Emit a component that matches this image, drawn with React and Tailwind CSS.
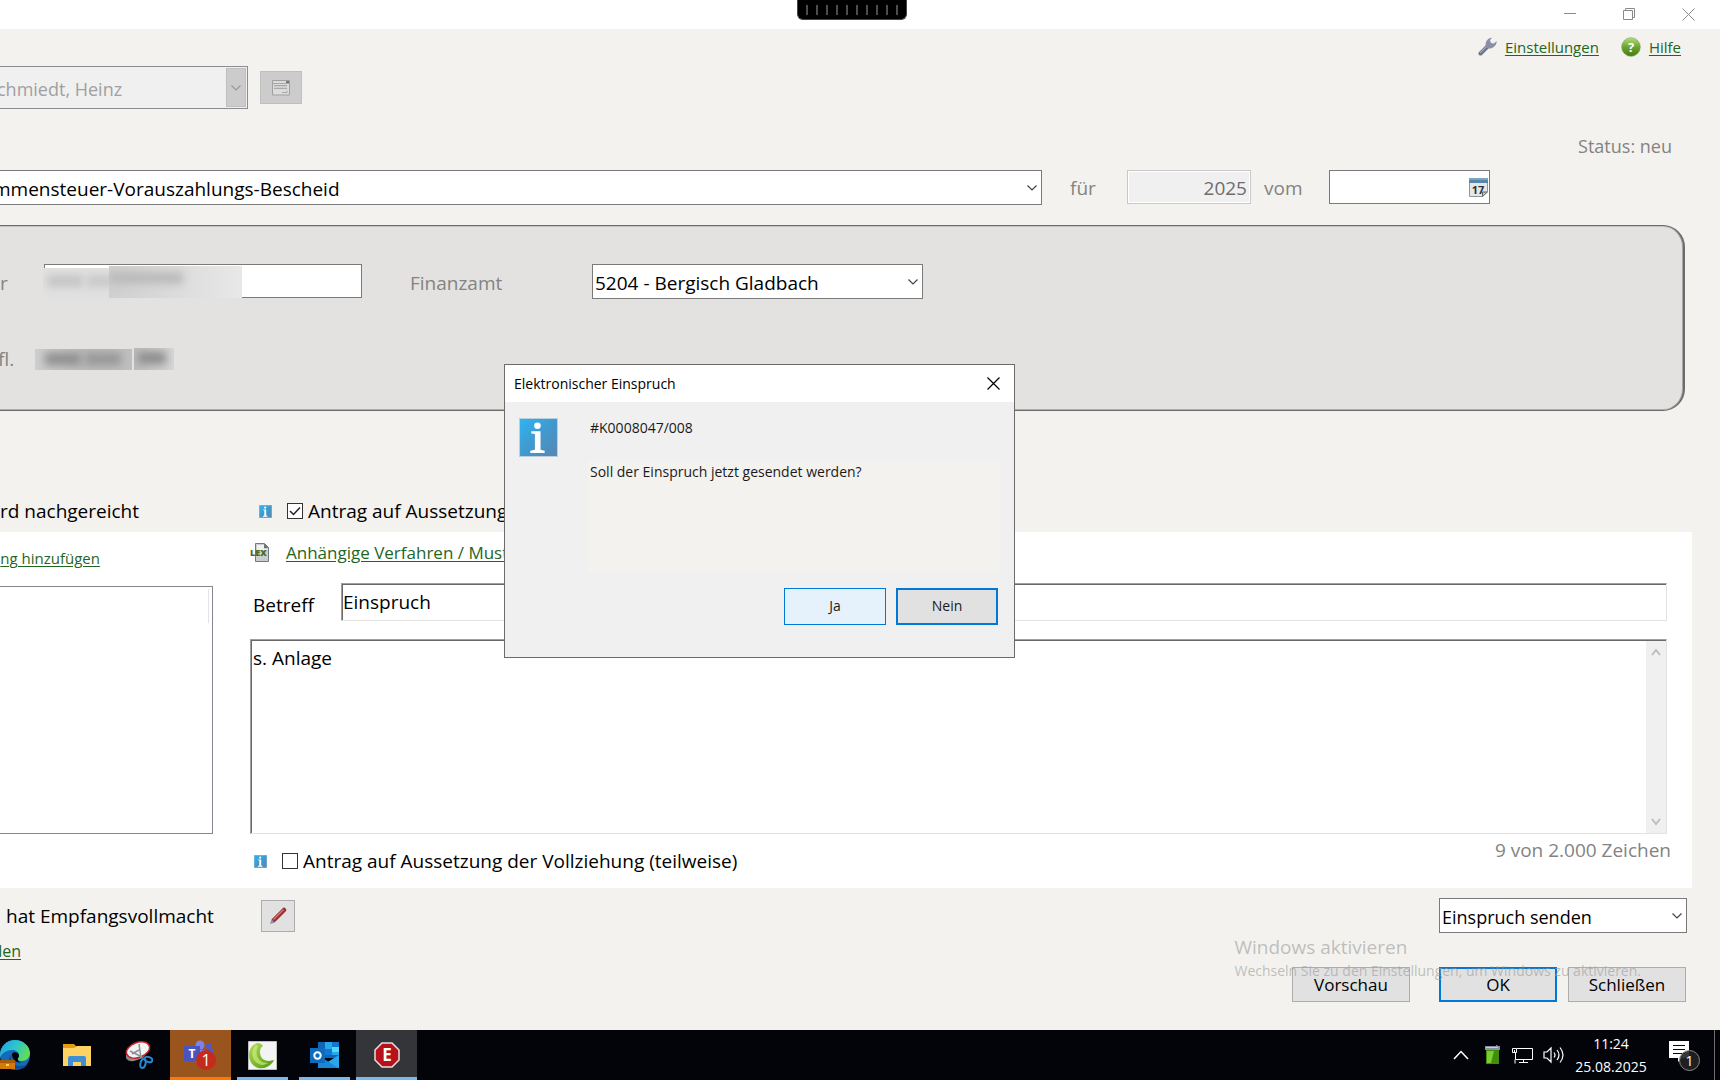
import { useState } from "react";

const App = () => {
  const [suspend, setSuspend] = useState(true);
  const [suspendPartly, setSuspendPartly] = useState(false);

  return (
    <div className="relative min-h-screen flex flex-col overflow-hidden bg-[#f3f2ee] text-black text-[19px] leading-7 font-['Open_Sans','Noto_Sans',sans-serif]">
      <TitleBar />

      <main className="flex-1 flex flex-col">
        <nav className="h-[37px] pb-0.5 flex items-center justify-end pr-[39px] text-[15px] leading-6">
          <WrenchIcon />
          <a href="#einstellungen" className="ml-2 text-[#1f661f] underline underline-offset-2">Einstellungen</a>
          <HelpIcon />
          <a href="#hilfe" className="ml-2 text-[#1f661f] underline underline-offset-2">Hilfe</a>
        </nav>

        {/* client picker, disabled while the objection is open */}
        <div className="flex items-center gap-3">
          <div className="relative -ml-1 w-[252px]">
            <select
              disabled
              aria-label="Mandant"
              className="block w-full h-[43px] pt-0.5 appearance-none bg-[#f0f0f0] border border-[#8c8c8c] text-[18px] text-[#a0a0a0] opacity-100"
            >
              <option>chmiedt, Heinz</option>
            </select>
            <span className="absolute right-0.5 inset-y-0.5 w-5 bg-[#cccccc] border border-[#bfbfbf] flex items-center justify-center pointer-events-none">
              <Chevron color="#9a9a9a" />
            </span>
          </div>
          <button disabled aria-label="Mandant öffnen" className="w-[42px] h-[33px] bg-[#cccccc] border border-[#bfbfbf] flex items-center justify-center">
            <FormIcon />
          </button>
        </div>

        <div className="h-[61px] pt-[23px] pr-12 text-right text-[18px] text-[#838383]">Status: neu</div>

        <div className="flex items-start pr-[230px]">
          <div className="flex-1 -ml-2">
            <Combo label="Bescheid" value="mmensteuer-Vorauszahlungs-Bescheid" className="pl-0" />
          </div>
          <label htmlFor="jahr" className="w-[85px] pt-1 pl-7 text-[#838383]">für</label>
          <input
            id="jahr"
            readOnly
            value="2025"
            className="w-[124px] h-[34px] pt-0.5 pr-[3px] text-right text-[#6d6d6d] bg-[#f0f0f0] border border-[#c8c8c8] shadow-[inset_0_0_0_1px_#fff] outline-none"
          />
          <label htmlFor="vom" className="w-[78px] pt-1 pl-[13px] text-[#838383]">vom</label>
          <div className="relative">
            <input id="vom" className="block w-[161px] h-[34px] px-1 bg-white border border-[#7a7a7a] outline-none" />
            <span className="absolute right-0.5 top-2"><CalendarIcon /></span>
          </div>
        </div>

        <section className="mt-5 mr-[35px] h-[186px] pt-[38px] rounded-r-[22px] bg-[#e3e2e0] border border-l-0 border-r-2 border-[#6b6b6b] shadow-[inset_-1px_0_0_#a5a5a5,inset_0_1px_0_#c4c4c4,inset_0_-1px_0_#b0b0b0]">
          <div className="flex items-start">
            <label htmlFor="steuernummer" className="w-11 pt-[5px] text-[#838383]">r</label>
            <div className="relative">
              <input id="steuernummer" className="block w-[318px] h-[34px] bg-white border border-[#7a7a7a] outline-none" />
              <Redaction className="absolute -left-px top-1 w-[84px] h-[33px] bg-[#e0e1e0]" bars={["left-1 w-9 bg-[#c4c4c4]", "left-11 w-10 bg-[#c8c8c8]"]} />
              <Redaction className="absolute left-[65px] top-0.5 w-[133px] h-8 bg-linear-to-r from-[#cfcfcf] to-[#e8e8e8]" bars={["left-0 w-[74px] bg-[#bababa]"]} />
            </div>
            <label htmlFor="finanzamt" className="w-[230px] pt-[5px] pl-12 text-[#838383]">Finanzamt</label>
            <div className="w-[331px]">
              <Combo id="finanzamt" label="Finanzamt" value="5204 - Bergisch Gladbach" className="pl-0.5" />
            </div>
          </div>
          <div className="mt-[46px] h-7 flex items-center text-[#838383]">
            <span className="w-[35px] -ml-0.5 mr-0.5">fl.</span>
            <Redaction className="relative w-[97px] h-[21px] bg-linear-to-r from-[#cfcfcf] via-[#bcbcbc] to-[#bfbfbf]" bars={["left-2.5 w-9 bg-[#8e8e8e]", "left-[50px] w-9 bg-[#969696]"]} />
            <Redaction className="relative ml-0.5 w-10 h-[22px] bg-linear-to-r from-[#bcbcbc] to-[#d6d6d8]" bars={["left-1 w-7 bg-[#8c8c8c]"]} />
          </div>
        </section>

        <div className="mt-[86px] mb-[7px] h-7 flex items-center">
          <span className="w-[259px]">rd nachgereicht</span>
          <InfoIcon size={13} />
          <Check id="aussetzung" checked={suspend} onChange={setSuspend} label="Antrag auf Aussetzung der Vollziehung" />
        </div>

        <section className="mr-7 h-[356px] pr-[25px] flex gap-[37px] bg-white">
          <div className="w-[213px] pt-3.5">
            <a href="#anlage" className="block h-6 w-[100px] text-[15px] leading-6 text-right whitespace-nowrap text-[#1f661f] underline underline-offset-2">
              ng hinzufügen
            </a>
            <div className="mt-4 h-[248px] pt-0.5 pr-[3px] border border-l-0 border-[#828790]">
              <div className="h-[34px] border-r border-[#e3e3e3]" />
            </div>
          </div>

          <div className="flex-1 pt-[9px] flex flex-col">
            <div className="h-6 flex items-center">
              <LexIcon />
              <a href="#verfahren" className="ml-4 text-[17px] leading-6 text-[#1f661f] underline underline-offset-2">
                Anhängige Verfahren / Musterverfahren
              </a>
            </div>
            <div className="mt-[18px] flex">
              <label htmlFor="betreff" className="w-[91px] pt-2 pl-[3px]">Betreff</label>
              <input
                id="betreff"
                defaultValue="Einspruch"
                className="flex-1 min-w-0 h-[38px] pl-px border border-t-[#a0a0a0] border-l-[#a0a0a0] border-r-[#e3e3e3] border-b-[#e3e3e3] shadow-[inset_1px_1px_0_#696969] outline-none"
              />
            </div>
            <div className="mt-[18px] h-[195px] flex border border-t-[#a0a0a0] border-l-[#a0a0a0] border-r-[#e3e3e3] border-b-[#e3e3e3] shadow-[inset_1px_1px_0_#696969]">
              <textarea
                aria-label="Begründung"
                defaultValue="s. Anlage"
                className="flex-1 mt-px ml-px pt-[3px] pl-px resize-none outline-none"
              />
              <div className="mt-px w-5 py-[7px] flex flex-col items-center justify-between bg-[#f0f0f0]">
                <ScrollArrow up />
                <ScrollArrow />
              </div>
            </div>
            <div className="flex justify-between">
              <div className="pt-[13px] pl-1 flex items-center">
                <InfoIcon size={13} />
                <Check id="teilweise" checked={suspendPartly} onChange={setSuspendPartly} label="Antrag auf Aussetzung der Vollziehung (teilweise)" />
              </div>
              <span className="pt-0.5 -mr-1 text-[#838383]">9 von 2.000 Zeichen</span>
            </div>
          </div>
        </section>

        <div className="mt-2.5 pr-[33px] flex items-center">
          <span className="w-[261px] pl-1.5">hat Empfangsvollmacht</span>
          <button aria-label="Bearbeiten" className="w-[34px] h-8 bg-[#e1e1e1] border border-[#adadad] flex items-center justify-center">
            <PenIcon />
          </button>
          <div className="ml-auto w-[248px]">
            <Combo label="Aktion" value="Einspruch senden" className="pl-0.5 text-[18px]" />
          </div>
        </div>
        <a href="#senden" className="mt-1.5 w-[21px] h-6 flex justify-end text-[16px] leading-6 text-[#1f661f] underline underline-offset-2">den</a>
        <div className="mt-1 mb-7 pr-[34px] flex justify-end text-[17px]">
          <button className="w-[118px] h-[35px] bg-[#e1e1e1] border border-[#adadad]">Vorschau</button>
          <button className="ml-[29px] w-[118px] h-[35px] bg-[#e1e1e1] border-2 border-[#0078d7]">OK</button>
          <button className="ml-[11px] w-[118px] h-[35px] bg-[#e1e1e1] border border-[#adadad]">Schließen</button>
        </div>
      </main>

      <Taskbar />

      {/* activation watermark floats above everything */}
      <div className="absolute right-[79px] bottom-[99px] pointer-events-none text-[#9a9a9a]/60">
        <p className="text-[19px] leading-7">Windows aktivieren</p>
        <p className="text-[14px] leading-5">Wechseln Sie zu den Einstellungen, um Windows zu aktivieren.</p>
      </div>

      <Dialog />
    </div>
  );
};

/* ---------------- WINDOW CHROME ---------------- */
const TitleBar = () => (
  <header className="relative h-[29px] pr-[25px] flex items-center justify-end gap-[46px] bg-white">
    <div className="absolute left-[797px] top-0 w-[110px] h-5 pt-[5px] flex justify-center gap-2 rounded-b-md bg-black border border-t-0 border-[#444]">
      {[...Array(10)].map((_, i) => (
        <span key={i} className="w-0.5 h-2.5 bg-[#4d4d4d]" />
      ))}
    </div>
    <button aria-label="Minimieren">
      <svg width="13" height="13" className="block"><path d="M0 5.500h12" stroke="#8a8a8a" /></svg>
    </button>
    <button aria-label="Wiederherstellen">
      <svg width="13" height="13" fill="none" stroke="#8a8a8a" className="block">
        <path d="M.5 2.500h9v9h-9zM2.500 2.500v-2h9v9h-2" />
      </svg>
    </button>
    <button aria-label="Fenster schließen">
      <svg width="13" height="13" className="block"><path d="M.5.5l12 12M12.500.5l-12 12" stroke="#8a8a8a" /></svg>
    </button>
  </header>
);

const Dialog = () => (
  <div role="dialog" aria-labelledby="dlg-title" className="absolute left-[504px] top-[364px] w-[511px] flex flex-col bg-[#f0f0f0] border border-[#6b6b6b] text-[14px] leading-[22px] text-[#1a1a1a]">
    <div className="h-[37px] pl-[9px] pr-3.5 flex items-center justify-between bg-white text-black">
      <h1 id="dlg-title">Elektronischer Einspruch</h1>
      <button aria-label="Schließen">
        <svg width="13" height="13" className="block"><path d="M.5.5l12 12M12.500.5l-12 12" stroke="#000" strokeWidth="1.200" /></svg>
      </button>
    </div>
    <div className="pt-[15px] pl-3.5 pr-[14px] flex">
      <span className="pt-px"><InfoIcon size={39} /></span>
      <div className="flex-1 ml-[30px] pl-0.5">
        <p className="h-11">#K0008047/008</p>
        <div className="-ml-0.5 pl-0.5 h-[111px] bg-[#f3f2ee]">
          <p className="whitespace-nowrap">Soll der Einspruch jetzt gesendet werden?</p>
        </div>
      </div>
    </div>
    <div className="mt-4 mb-8 pr-4 flex justify-end gap-2.5">
      <button className="w-[102px] h-[37px] pb-0.5 bg-[#e5f1fb] border border-[#0078d7]">Ja</button>
      <button className="w-[102px] h-[37px] pb-0.5 bg-[#e1e1e1] border-2 border-[#0078d7]">Nein</button>
    </div>
  </div>
);

/* ---------------- TASKBAR ---------------- */
const Taskbar = () => (
  <footer className="h-[50px] flex items-stretch justify-between bg-[#02040a] text-white">
    <div className="flex -ml-4 gap-px">
      <Task label="Edge"><EdgeIcon /></Task>
      <Task label="Explorer"><FolderIcon /></Task>
      <Task label="Snipping Tool"><SnipIcon /></Task>
      <Task label="Teams" className="bg-[#9a541e]" bar="inset-x-0 bg-[#ff7800]"><TeamsIcon /></Task>
      <Task label="Lexware" bar="inset-x-[5px] bg-[#76b9ed]"><SwirlIcon /></Task>
      <Task label="Outlook" bar="inset-x-[5px] bg-[#76b9ed]"><OutlookIcon /></Task>
      <Task label="Einspruch" className="bg-[#333539]" bar="inset-x-0 bg-[#76b9ed]"><StopIcon /></Task>
    </div>
    <div className="flex items-center">
      <svg width="16" height="10" fill="none" stroke="#fff" strokeWidth="1.500"><path d="M1 9l7-7.500L15 9" /></svg>
      <svg width="17" height="20" className="ml-[15px]">
        <path d="M2 5h13v14H2z" fill="#3f8f0c" />
        <path d="M3 6h7l-3 12H3z" fill="#7ccc33" />
        <path d="M1 1h11V0h1.500v1H16v4H1z" fill="#8a90a0" />
        <path d="M2 2h12v1H2z" fill="#c9cdd8" />
      </svg>
      <svg width="21" height="17" className="ml-[11px]" fill="none" stroke="#fff">
        <path d="M5 1.500h15.500v11H3.500V6M.5 1.500h4v4h-4zM2.500 3v3M3 16.500v-4M7 15.500h9M11.500 13v2.500" />
      </svg>
      <svg width="22" height="18" className="ml-2.5" fill="none" stroke="#fff" strokeWidth="1.200">
        <path d="M1 6h3l4-4v14l-4-4H1zM11 6.500q2 2.500 0 5M14 4q4 5 0 10M17 1.500q6 7.500 0 15" />
      </svg>
      <div className="ml-2.5 w-[72px] text-center text-[14px] leading-[23px]">
        <p>11:24</p>
        <p>25.08.2025</p>
      </div>
      <div className="relative ml-[22px] w-[31px] h-8">
        <svg width="20" height="22" className="mt-0.5">
          <path d="M0 0h20v17h-7l-4 4v-4H0z" fill="#fff" />
          <path d="M4 4.500h12M4 8.500h12M4 12.500h12" stroke="#02040a" />
        </svg>
        <span className="absolute right-0 bottom-0 size-[21px] flex items-center justify-center rounded-full bg-[#222]/90 border border-[#888] text-[14px]">1</span>
      </div>
      <span className="ml-3.5 mr-[5px] w-px h-full bg-[#6d6d6d]" />
    </div>
  </footer>
);

const Task = ({ label, className = "", bar, children }) => (
  <button aria-label={label} className={`relative w-[61px] flex items-center justify-center ${className}`}>
    {children}
    {bar && <span className={`absolute bottom-0 h-[3px] ${bar}`} />}
  </button>
);

/* ---------------- FORM HELPERS ---------------- */
const Combo = ({ id, label, value, className }) => (
  <div className="relative">
    <select id={id} aria-label={label} className={`block w-full h-[35px] pt-0.5 appearance-none bg-white border border-[#7a7a7a] outline-none ${className}`}>
      <option>{value}</option>
    </select>
    <span className="absolute right-[5px] inset-y-0 flex items-center pointer-events-none">
      <Chevron color="#444" />
    </span>
  </div>
);

const Check = ({ id, checked, onChange, label }) => (
  <div className="flex items-center ml-[15px]">
    <span className="relative">
      <input
        id={id}
        type="checkbox"
        checked={checked}
        onChange={e => onChange(e.target.checked)}
        className="block size-4 appearance-none bg-white border border-[#333]"
      />
      {checked && (
        <svg width="16" height="16" className="absolute inset-0 pointer-events-none" fill="none" stroke="#222" strokeWidth="1.500">
          <path d="M3 8l3.500 3.500L13 4.500" />
        </svg>
      )}
    </span>
    <label htmlFor={id} className="pl-[5px] whitespace-nowrap">{label}</label>
  </div>
);

const Redaction = ({ className, bars }) => (
  <div className={`overflow-hidden ${className}`}>
    {bars.map(bar => (
      <span key={bar} className={`absolute top-1/5 h-3 blur-[4px] ${bar}`} />
    ))}
  </div>
);

/* ---------------- ICONS ---------------- */
const Chevron = ({ color }) => (
  <svg width="10" height="6" fill="none" stroke={color} strokeWidth="1.200"><path d="M.5.5L5 5 9.500.5" /></svg>
);

const ScrollArrow = ({ up }) => (
  <svg width="10" height="8" fill="none" stroke="#bdbdbd" strokeWidth="2">
    <path d={up ? "M1 7l4-5 4 5" : "M1 1l4 5 4-5"} />
  </svg>
);

const InfoIcon = ({ size }) => (
  <svg width={size} height={size} viewBox="0 0 38 38" className="shrink-0">
    <defs>
      <linearGradient id="info" x1="0" y1="0" x2="1" y2="1">
        <stop offset="0" stopColor="#2fb4f2" />
        <stop offset=".5" stopColor="#4199cd" />
        <stop offset="1" stopColor="#5488b4" />
      </linearGradient>
    </defs>
    <path d="M0 0h38v38H0z" fill="#b9cfdd" />
    <path d="M1 1h36v36H1z" fill="url(#info)" />
    <circle cx="18" cy="7.500" r="3.200" fill="#fff" />
    <path d="M12 13h9v18l4 1v2H11v-2l4.500-1V15.500L12 15z" fill="#fff" />
  </svg>
);

const WrenchIcon = () => (
  <svg width="19" height="19" viewBox="0 0 19 19">
    <path d="M2.500 16.500L10 9" stroke="#6d7087" strokeWidth="4" strokeLinecap="round" />
    <path d="M2.500 15.500L10 8" stroke="#a2a7bd" strokeWidth="1.300" strokeLinecap="round" />
    <path d="M8 10C6.500 5 9.500 1 14 .4L12 3.200 13 6l3 .6L18.600 4C19 8.500 15 12 10 11.500z" fill="#8a8ea8" />
  </svg>
);

const HelpIcon = () => (
  <svg width="20" height="20" viewBox="0 0 20 20" className="ml-[22px]">
    <defs>
      <linearGradient id="help" x1="0" y1="0" x2="0" y2="1">
        <stop offset="0" stopColor="#b3df78" />
        <stop offset=".5" stopColor="#6ba52f" />
        <stop offset="1" stopColor="#477c16" />
      </linearGradient>
    </defs>
    <circle cx="10" cy="10" r="9.300" fill="url(#help)" stroke="#7a9b5c" strokeWidth=".6" />
    <text x="10" y="14.500" textAnchor="middle" fontSize="13" fontWeight="700" fill="#fff">?</text>
  </svg>
);

const FormIcon = () => (
  <svg width="18" height="16" fill="none">
    <path d="M.5.500h17v14.500H.5z" fill="#dcdcdc" stroke="#a0a0a0" />
    <path d="M1 3.500h16M2 5.500h13M2 8.500h13M10 12.500h5v-2" stroke="#a8a8a8" />
    <path d="M2 6h13v2H2z" fill="#cfcfcf" />
    <path d="M14 1h3v2h-3z" fill="#777" />
  </svg>
);

const CalendarIcon = () => (
  <svg width="19" height="19" className="block">
    <path d="M.5.5h18v13l-5 5H.5z" fill="#e4e7e7" stroke="#8d9598" />
    <path d="M0 0h19v5H0z" fill="#5585a8" />
    <path d="M0 0h19v2H0z" fill="#7ea5c1" />
    <text x="9" y="16" textAnchor="middle" fontSize="11" fontWeight="700" fill="#2c3238">17</text>
    <path d="M13.500 18.500v-4.500h5z" fill="#c6cacc" stroke="#5d6468" />
  </svg>
);

const LexIcon = () => (
  <svg width="20" height="20" className="shrink-0">
    <path d="M5.500.5h9l4 4v14h-13z" fill="#c9ced1" stroke="#73797c" />
    <path d="M7 2h7v4h4v1H7z" fill="#eef0f1" />
    <path d="M14 .5l4.500 4.500H14z" fill="#6b7174" />
    <text x="0" y="13" fontSize="9" fontWeight="800" fill="#4c6b1f">LEX</text>
  </svg>
);

const PenIcon = () => (
  <svg width="18" height="18">
    <path d="M5 13L15 3" stroke="#933" strokeWidth="4.500" strokeLinecap="round" />
    <path d="M5 12L14 3" stroke="#d77" strokeWidth="1.300" strokeLinecap="round" />
    <path d="M1 17l1.500-4.500 3.500 3z" fill="#8d8db0" />
  </svg>
);

const EdgeIcon = () => (
  <svg width="30" height="30" viewBox="0 0 30 30">
    <defs>
      <linearGradient id="edge" x1="0" y1="0" x2="1" y2=".5">
        <stop offset="0" stopColor="#1b9de2" />
        <stop offset=".5" stopColor="#2bc3d2" />
        <stop offset="1" stopColor="#5fdc5c" />
      </linearGradient>
    </defs>
    <circle cx="15" cy="15" r="15" fill="#1469b8" />
    <path d="M0 15C0 6 7 0 15 0s15 6 15 13c0 5-4 8-8 8-3 0-5-1-4-3 1-1 1-2 1-3 0-3-3-5-7-5-6 0-11 4-12 8z" fill="url(#edge)" />
    <path d="M12 14c-3 6 1 12 8 12 4 0 6-1 8-3-1 3-5 7-12 7-7 0-10-10-4-16z" fill="#0e4d94" />
    <path d="M12 14c0 5 3 8 9 9-2-1-4-3-3-5 1-1 1-2 1-3-1-3-6-4-7-1z" fill="#02040a" />
    <path d="M0 20h15v9H0z" fill="#d27a0b" />
    <path d="M0 20h15v3H0z" fill="#a85a08" />
    <path d="M6 24h3v2H6z" fill="#ffd45c" />
  </svg>
);

const FolderIcon = () => (
  <svg width="28" height="24">
    <path d="M0 1h11l3 3h13v4H0z" fill="#e19c10" />
    <path d="M0 5h11l3-2h14v20H0z" fill="#fed363" />
    <path d="M5 23V15q0-2 2-2h14q2 0 2 2v8h-5v-4h-8v4z" fill="#3f8fd6" />
  </svg>
);

const SnipIcon = () => (
  <svg width="28" height="28" fill="none">
    <path d="M1 14q-1 7 8 6l9-3 7-9z" fill="#8b8b8b" />
    <ellipse cx="13" cy="9" rx="12" ry="7.500" transform="rotate(-20 13 9)" fill="#f3f3f3" stroke="#c4262b" strokeWidth="1.500" />
    <path d="M14 3l2 14M5 10l12 6M14 9l-7 4" stroke="#8b9399" strokeWidth="1.500" />
    <ellipse cx="18" cy="22.500" rx="2.500" ry="4.500" transform="rotate(15 18 22.500)" stroke="#2788d2" strokeWidth="2" />
    <ellipse cx="23.500" cy="18.500" rx="4" ry="2.500" transform="rotate(20 23.500 18.500)" stroke="#2788d2" strokeWidth="2" />
  </svg>
);

const TeamsIcon = () => (
  <svg width="33" height="31" className="mt-px">
    <circle cx="16" cy="5" r="4.500" fill="#7b83eb" />
    <circle cx="25" cy="6" r="3" fill="#5059c9" />
    <path d="M12 10h18v8q-3 7-9 6-8 0-9-6z" fill="#5059c9" />
    <path d="M10 10h12v16q-9 0-12-8z" fill="#7b83eb" />
    <path d="M0 6h16v15H0z" fill="#4b53bc" />
    <text x="8" y="18" textAnchor="middle" fontSize="12" fontWeight="700" fill="#fff">T</text>
    <circle cx="22" cy="20" r="10" fill="#c42b1c" />
    <text x="22" y="26" textAnchor="middle" fontSize="16" fill="#fff">1</text>
  </svg>
);

const SwirlIcon = () => (
  <svg width="29" height="29">
    <defs>
      <linearGradient id="swirl" x1="0" y1="0" x2="1" y2="1">
        <stop offset="0" stopColor="#b4dd58" />
        <stop offset="1" stopColor="#4c9a0c" />
      </linearGradient>
    </defs>
    <path d="M.5.5h28v28H.5z" fill="#f3f3f3" stroke="#bdbdbd" />
    <path d="M9 2C0 5-1 17 4 23c5 6 15 6 21-2l1-2-5 1c-6 0-9-4-9-9 0-3 1-5 3-6-1-2-3-3-6-3z" fill="url(#swirl)" />
    <path d="M8 4C3 8 3 18 9 22c4 3 8 2 11 0C10 22 6 13 10 5z" fill="#d9f28d" opacity=".6" />
  </svg>
);

const OutlookIcon = () => (
  <svg width="30" height="28">
    <path d="M8 1h21v16H8z" fill="#1066b5" />
    <path d="M15 1h7v7h-7zM22 8h7v6h-7z" fill="#28a8ea" />
    <path d="M22 6h7v5h-7z" fill="#50d9ff" />
    <path d="M22 1h7v5h-7zM15 8h7v6h-7z" fill="#0f78d4" />
    <path d="M8 27l21-13v13z" fill="#28a8ea" />
    <path d="M8 14l20 13H8z" fill="#1a86d8" />
    <path d="M0 7h15v15H0z" fill="#0f6cbd" />
    <circle cx="7.500" cy="14.500" r="3.200" fill="none" stroke="#fff" strokeWidth="2" />
  </svg>
);

const StopIcon = () => (
  <svg width="26" height="26">
    <path d="M8 1h10l7 7v10l-7 7H8l-7-7V8z" fill="#b5121b" stroke="#e9dede" strokeWidth="1.500" />
    <text x="13" y="19" textAnchor="middle" fontSize="17" fontWeight="700" fill="#fff">E</text>
  </svg>
);

export default App;
